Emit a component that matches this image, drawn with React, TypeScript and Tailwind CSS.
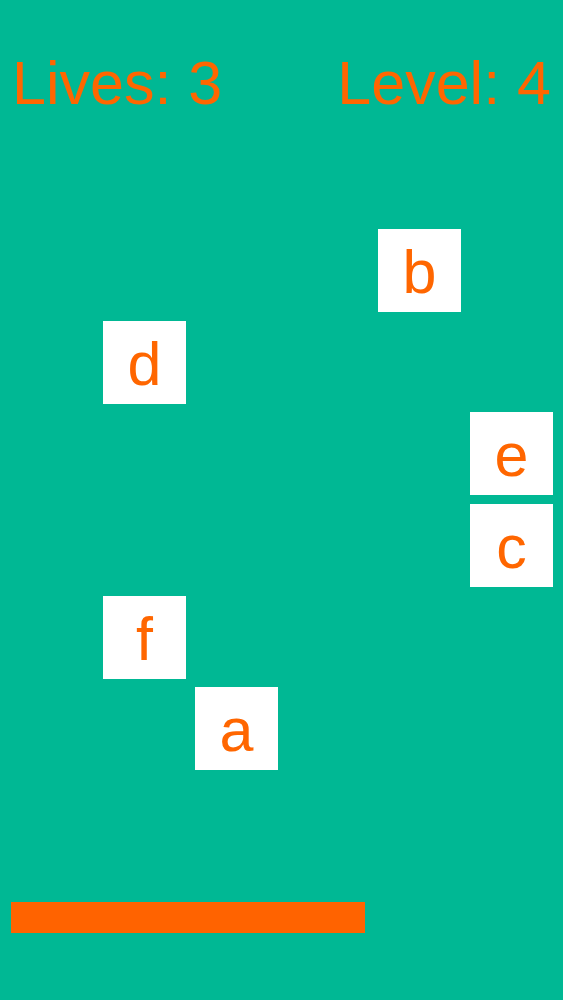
import React from "react";

const tiles = [
  { ch: "b", x: 378, y: 229 },
  { ch: "d", x: 103, y: 321 },
  { ch: "e", x: 470, y: 412 },
  { ch: "c", x: 470, y: 504 },
  { ch: "f", x: 103, y: 596 },
  { ch: "a", x: 195, y: 687 },
];

export default function App() {
  return (
    <div
      className="relative w-[563px] h-[1000px] bg-[#00b894] overflow-hidden"
      style={{ fontFamily: '"Liberation Sans", Arial, sans-serif' }}
    >
      <div className="flex justify-between pt-[53px] pl-[12px] pr-[12px] text-[61px] leading-none text-[#ff6600]">
        <span>Lives: 3</span>
        <span>Level: 4</span>
      </div>
      {tiles.map((t) => (
        <div
          key={t.ch}
          className="absolute w-[83px] h-[83px] bg-white flex items-center justify-center pt-[3px] text-[61px] leading-none text-[#ff6600]"
          style={{ left: t.x, top: t.y }}
        >
          {t.ch}
        </div>
      ))}
      <div className="absolute left-[11px] top-[902px] w-[354px] h-[31px] bg-[#ff6300]" />
    </div>
  );
}
